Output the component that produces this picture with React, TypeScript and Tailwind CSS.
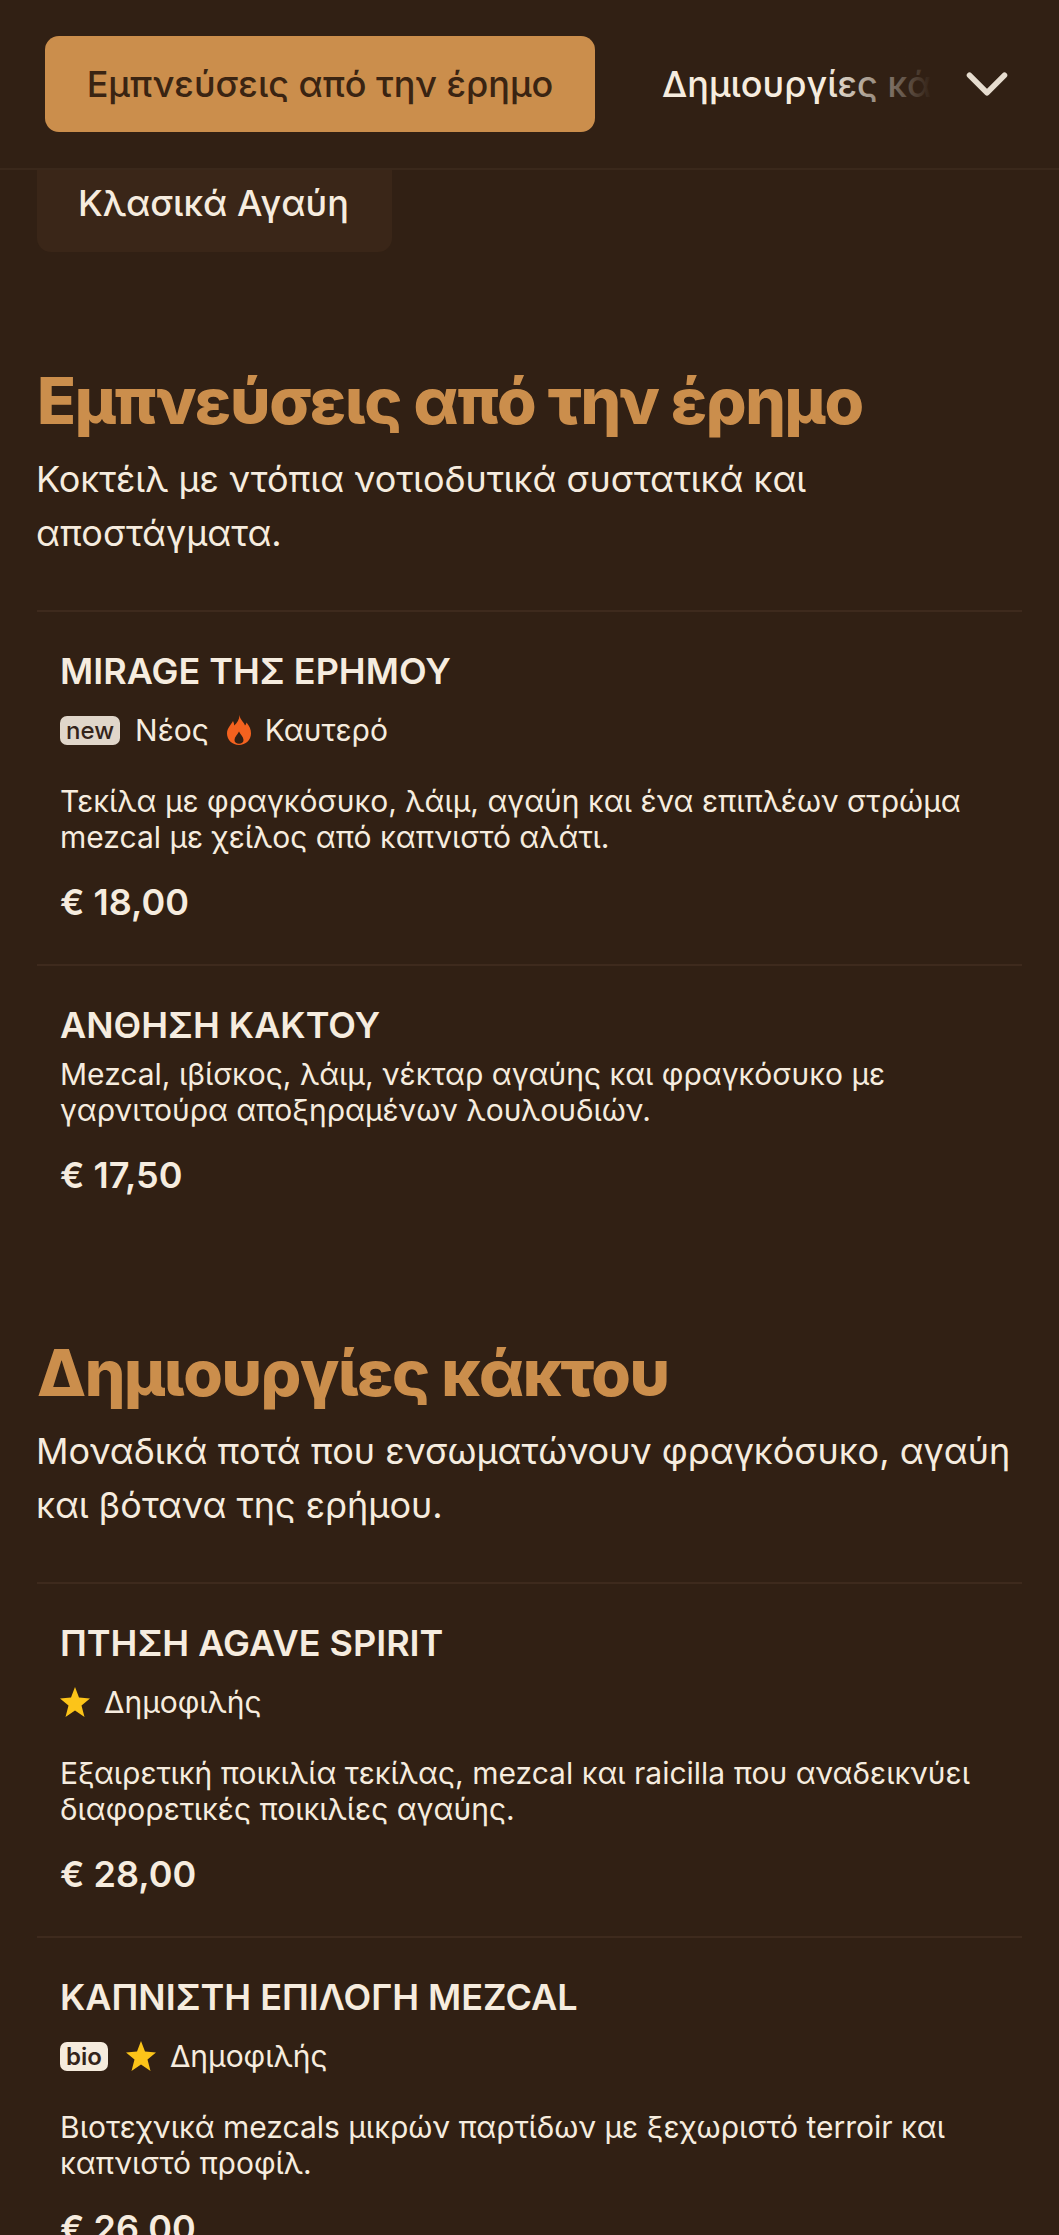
import { ChevronDown } from "lucide-react";

type Item = {
  name: string;
  badge?: "new" | "bio";
  badgeLabel?: string;
  hot?: boolean;
  popular?: boolean;
  desc: string[];
  price: string;
};

const desert: Item[] = [
  {
    name: "MIRAGE ΤΗΣ ΕΡΗΜΟΥ",
    badge: "new",
    badgeLabel: "Νέος",
    hot: true,
    desc: ["Τεκίλα με φραγκόσυκο, λάιμ, αγαύη και ένα επιπλέων στρώμα", "mezcal με χείλος από καπνιστό αλάτι."],
    price: "€ 18,00",
  },
  {
    name: "ΑΝΘΗΣΗ ΚΑΚΤΟΥ",
    desc: ["Mezcal, ιβίσκος, λάιμ, νέκταρ αγαύης και φραγκόσυκο με", "γαρνιτούρα αποξηραμένων λουλουδιών."],
    price: "€ 17,50",
  },
];

const cactus: Item[] = [
  {
    name: "ΠΤΗΣΗ AGAVE SPIRIT",
    popular: true,
    desc: ["Εξαιρετική ποικιλία τεκίλας, mezcal και raicilla που αναδεικνύει", "διαφορετικές ποικιλίες αγαύης."],
    price: "€ 28,00",
  },
  {
    name: "ΚΑΠΝΙΣΤΗ ΕΠΙΛΟΓΗ MEZCAL",
    badge: "bio",
    popular: true,
    desc: ["Βιοτεχνικά mezcals μικρών παρτίδων με ξεχωριστό terroir και", "καπνιστό προφίλ."],
    price: "€ 26,00",
  },
];

function Flame() {
  return (
    <svg viewBox="0 0 24 30" className="mr-[14px] h-[30px] w-[24px] shrink-0 text-[#f4621f]">
      <path
        fill="currentColor"
        fillRule="evenodd"
        d="M12.5 0C13 5 17 7 18 10.5C18.8 9.8 19.3 8.7 19.5 7.5C22.5 11 24 14.5 24 18.5C24 25 18.6 30 12 30C5.4 30 0 25 0 18.5C0 13 4 10 6 6C6.8 7.5 7.2 9 7.2 10.5C10 8 12.5 4.5 12.5 0ZM12 16.5C13.5 19.5 16.5 22 16.5 25C16.5 27.5 14.5 28.8 12 28.8C9.5 28.8 7.5 27.5 7.5 25C7.5 22 10.5 19.5 12 16.5Z"
      />
    </svg>
  );
}

function Star() {
  return (
    <svg viewBox="0 0 30 30" className="mr-[14px] h-[30px] w-[30px] shrink-0 text-[#fcc419]">
      <polygon fill="currentColor" points="15,0 19,10.5 30,11.5 21.5,18.5 24.5,30 15,23.5 5.5,30 8.5,18.5 0,11.5 11,10.5" />
    </svg>
  );
}

function MenuItem({ item }: { item: Item }) {
  const hasTags = item.badge || item.hot || item.popular;
  return (
    <div className="border-t-2 border-[#3e2a1d] px-[23px] pt-[35px] pb-[40px]">
      <h3 className="text-[36px] leading-[48px] font-semibold">{item.name}</h3>
      {hasTags ? (
        <div className="mt-[15px] mb-[33px] flex h-[40px] items-center text-[30px]">
          {item.badge === "new" && (
            <span className="mr-[15px] rounded-[7px] bg-[#e0d6ca] px-[6px] text-[24px] leading-[29px] font-medium text-[#33231a]">new</span>
          )}
          {item.badge === "bio" && (
            <span className="mr-[18px] rounded-[7px] bg-[#f5ebdd] px-[6px] text-[24px] leading-[29px] font-semibold text-[#33231a]">bio</span>
          )}
          {item.badgeLabel && <span className="mr-[18px]">{item.badgeLabel}</span>}
          {item.hot && (
            <>
              <Flame />
              <span>Καυτερό</span>
            </>
          )}
          {item.popular && (
            <>
              <Star />
              <span>Δημοφιλής</span>
            </>
          )}
        </div>
      ) : (
        <div className="h-[7px]" />
      )}
      <p className="text-[30px] leading-[36px]">
        {item.desc.map((line) => (
          <span key={line} className="block whitespace-nowrap">{line}</span>
        ))}
      </p>
      <p className="mt-[25px] text-[36px] leading-[44px] font-semibold">{item.price}</p>
    </div>
  );
}

function Section({ title, lines, items }: { title: string; lines: string[]; items: Item[] }) {
  return (
    <section>
      <h2 className="text-[64px] leading-[80px] font-extrabold tracking-[-1.4px] text-[#cb8e4c]">{title}</h2>
      <p className="mt-[11px] -ml-px text-[36px] leading-[54px]">
        {lines.map((line) => (
          <span key={line} className="block whitespace-nowrap">{line}</span>
        ))}
      </p>
      <div className="mt-[50px]">
        {items.map((item) => (
          <MenuItem key={item.name} item={item} />
        ))}
      </div>
    </section>
  );
}

export default function App() {
  return (
    <div className="h-screen overflow-hidden bg-[#312014] font-['Inter',sans-serif] text-[#f6ecdf]">
      <header className="flex h-[170px] items-start border-b-2 border-[#3a281b] pt-[36px] pl-[45px]">
        <button className="h-[96px] w-[550px] shrink-0 rounded-[14px] bg-[#cb8e4c] text-center text-[36px] font-medium text-[#3a2412]">
          Εμπνεύσεις από την έρημο
        </button>
        <div className="relative ml-[67px] h-[96px] w-[270px] overflow-hidden">
          <span className="block text-[36px] leading-[96px] font-medium whitespace-nowrap">Δημιουργίες κάκτου</span>
          <div className="absolute inset-y-0 right-0 w-[105px] bg-gradient-to-r from-transparent to-[#312014]" />
        </div>
        <ChevronDown className="mt-[13px] ml-[20px] h-[70px] w-[70px] text-[#e6dccf]" strokeWidth={1.9} />
      </header>
      <main className="px-[37px]">
        <div className="w-[355px] rounded-b-[14px] bg-[#3a2618] pt-[6px] pb-[22px] pl-[41px] text-[36px] leading-[54px] font-medium">
          Κλασικά Αγαύη
        </div>
        <div className="mt-[109px]">
          <Section
            title="Εμπνεύσεις από την έρημο"
            lines={["Κοκτέιλ με ντόπια νοτιοδυτικά συστατικά και", "αποστάγματα."]}
            items={desert}
          />
        </div>
        <div className="mt-[96px]">
          <Section
            title="Δημιουργίες κάκτου"
            lines={["Μοναδικά ποτά που ενσωματώνουν φραγκόσυκο, αγαύη", "και βότανα της ερήμου."]}
            items={cactus}
          />
        </div>
      </main>
    </div>
  );
}
